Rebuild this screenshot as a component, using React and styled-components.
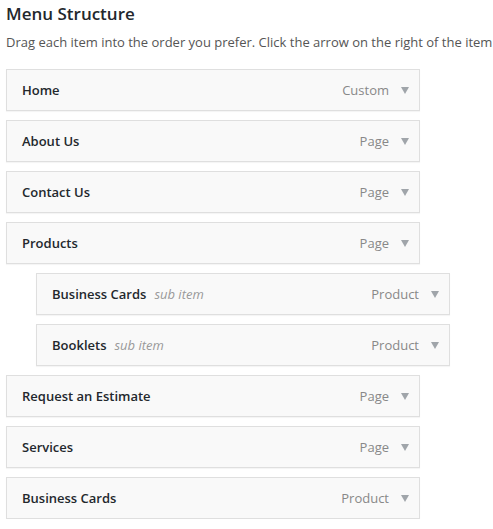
import React from "react";
import styled, { createGlobalStyle } from "styled-components";

const GlobalStyle = createGlobalStyle`
  body {
    margin: 0;
    background: #fff;
    font-family: "Open Sans", "Liberation Sans", sans-serif;
    color: #23282d;
  }
`;

const Page = styled.div`
  padding: 3px 0 0 6px;
  width: 487px;
  overflow: hidden;
`;

const Title = styled.h2`
  margin: 0;
  font-size: 17px;
  font-weight: 600;
  line-height: 22px;
  color: #23282d;
`;

const Intro = styled.p`
  margin: 8px 0 0;
  font-size: 13px;
  line-height: 18px;
  color: #555;
  white-space: nowrap;
`;

const List = styled.ul`
  list-style: none;
  margin: 18px 0 0;
  padding: 0;
  display: flex;
  flex-direction: column;
  gap: 9px;
`;

const Bar = styled.li`
  box-sizing: border-box;
  width: 414px;
  height: 42px;
  margin-left: ${(p) => (p.$depth ? p.$depth * 30 : 0)}px;
  display: flex;
  align-items: center;
  padding: 0 10px 0 15px;
  background: #f9f9f9;
  border: 1px solid #dfdfdf;
  box-shadow: 0 1px 1px rgba(0, 0, 0, 0.04);
`;

const Label = styled.span`
  font-size: 13px;
  font-weight: 600;
  color: #23282d;
`;

const Sub = styled.span`
  margin-left: 8px;
  font-size: 13px;
  font-style: italic;
  color: #999;
`;

const Kind = styled.span`
  margin-left: auto;
  font-size: 13px;
  color: #888;
`;

const Arrow = styled.span`
  margin-left: 12px;
  width: 0;
  height: 0;
  border-left: 4.5px solid transparent;
  border-right: 4.5px solid transparent;
  border-top: 7px solid #a0a5aa;
  margin-top: 1px;
`;

const items = [
  { label: "Home", kind: "Custom" },
  { label: "About Us", kind: "Page" },
  { label: "Contact Us", kind: "Page" },
  { label: "Products", kind: "Page" },
  { label: "Business Cards", kind: "Product", depth: 1 },
  { label: "Booklets", kind: "Product", depth: 1 },
  { label: "Request an Estimate", kind: "Page" },
  { label: "Services", kind: "Page" },
  { label: "Business Cards", kind: "Product" },
];

export default function App() {
  return (
    <>
      <GlobalStyle />
      <Page>
        <Title>Menu Structure</Title>
        <Intro>
          Drag each item into the order you prefer. Click the arrow on the right of the item
        </Intro>
        <List>
          {items.map((it, i) => (
            <Bar key={i} $depth={it.depth}>
              <Label>{it.label}</Label>
              {it.depth ? <Sub>sub item</Sub> : null}
              <Kind>{it.kind}</Kind>
              <Arrow />
            </Bar>
          ))}
        </List>
      </Page>
    </>
  );
}
